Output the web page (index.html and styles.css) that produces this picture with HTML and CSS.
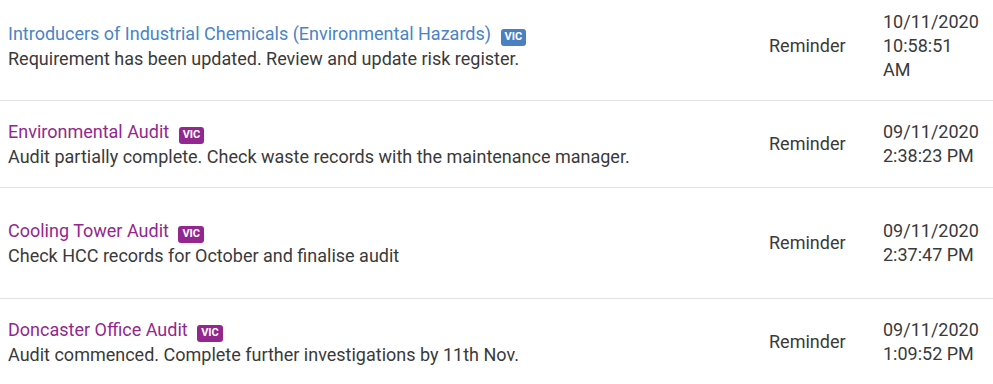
FILE: index.html
```html
<!DOCTYPE html>
<html lang="en">
<head>
  <meta charset="UTF-8" />
  <meta name="viewport" content="width=device-width, initial-scale=1.0" />
  <title>Notifications</title>
  <link rel="stylesheet" href="styles.css">
</head>
<body>
  <div class="feed">
    <div class="feed-row">
      <div class="feed-main">
        <div class="feed-title title-blue">Introducers of Industrial Chemicals (Environmental Hazards) <span class="tag tag-blue">VIC</span></div>
        <div class="feed-msg">Requirement has been updated. Review and update risk register.</div>
      </div>
      <div class="feed-type">Reminder</div>
      <div class="feed-date">10/11/2020 10:58:51 AM</div>
    </div>

    <div class="feed-row">
      <div class="feed-main">
        <div class="feed-title title-purple">Environmental Audit <span class="tag tag-purple">VIC</span></div>
        <div class="feed-msg">Audit partially complete. Check waste records with the maintenance manager.</div>
      </div>
      <div class="feed-type">Reminder</div>
      <div class="feed-date">09/11/2020 2:38:23 PM</div>
    </div>

    <div class="feed-row feed-row-tall">
      <div class="feed-main">
        <div class="feed-title title-purple">Cooling Tower Audit <span class="tag tag-purple">VIC</span></div>
        <div class="feed-msg">Check HCC records for October and finalise audit</div>
      </div>
      <div class="feed-type">Reminder</div>
      <div class="feed-date">09/11/2020 2:37:47 PM</div>
    </div>

    <div class="feed-row">
      <div class="feed-main">
        <div class="feed-title title-purple">Doncaster Office Audit <span class="tag tag-purple">VIC</span></div>
        <div class="feed-msg">Audit commenced. Complete further investigations by 11th Nov.</div>
      </div>
      <div class="feed-type">Reminder</div>
      <div class="feed-date">09/11/2020 1:09:52 PM</div>
    </div>
  </div>
</body>
</html>
```

FILE: styles.css
```css
body {
  font-family: Roboto, 'Noto Sans', sans-serif;
  margin: 0;
  background: #fff;
  color: #3a3a3a;
  font-size: 18px;
  line-height: 24px;
}

.feed {
  margin-top: -8px;
}

.feed-row {
  display: grid;
  grid-template-columns: 1fr 114px 118px;
  align-items: center;
  padding: 18px 0;
  border-bottom: 1px solid #e3e3e3;
}

.feed-row-tall {
  min-height: 74px;
}

.feed-main,
.feed-type {
  padding: 0 8px;
}

.feed-title {
  line-height: 26px;
}

.feed-date {
  padding: 0 12px 0 8px;
}

.title-blue {
  color: #4a84c6;
}

.title-purple {
  color: #93278f;
}

.tag {
  display: inline-block;
  margin-left: 5px;
  padding: 2px 4px 3px;
  border-radius: 3px;
  color: #fff;
  font-size: 11px;
  font-weight: bold;
  line-height: 12px;
}

.tag-blue {
  background: #4a7fc1;
}

.tag-purple {
  background: #93278f;
}
```
